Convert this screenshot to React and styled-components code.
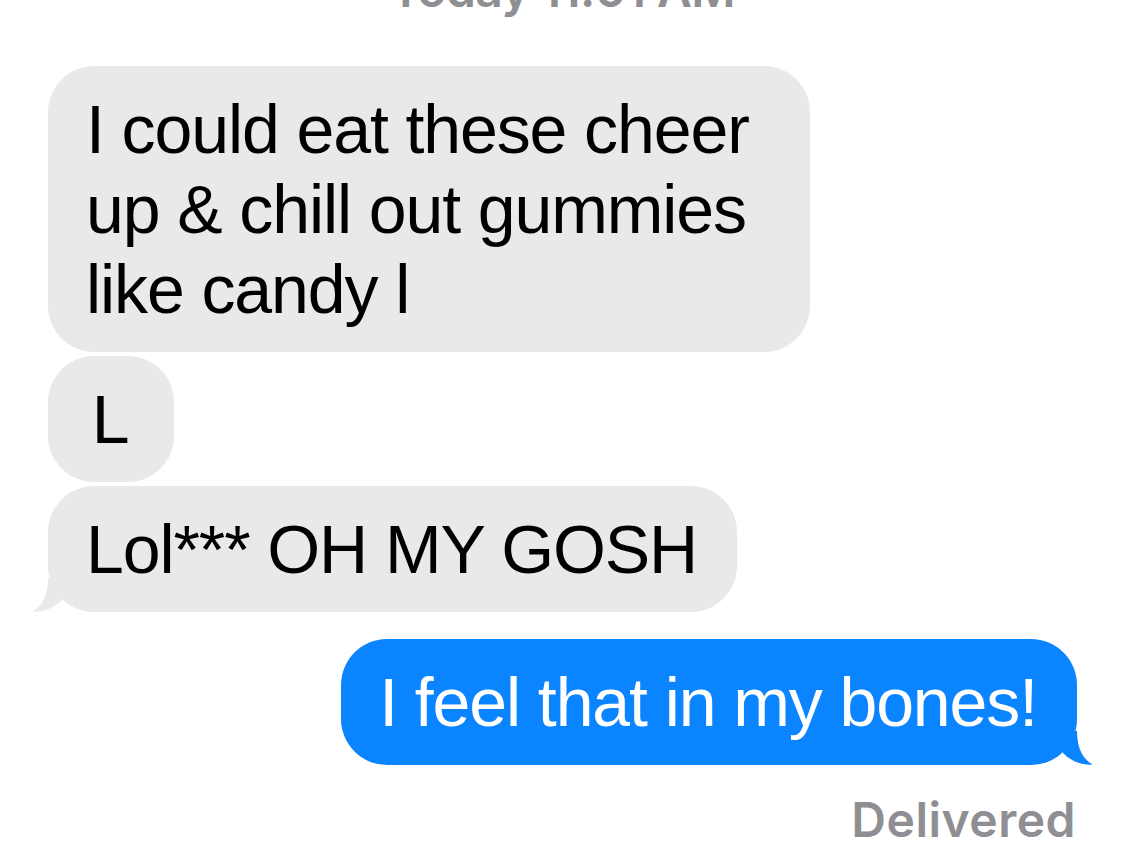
import React from "react"
import styled, { createGlobalStyle } from "styled-components"

const GlobalStyle = createGlobalStyle`
  html, body {
    margin: 0;
    padding: 0;
    background: #ffffff;
    overflow: hidden;
  }
  body {
    font-family: Inter, "Liberation Sans", Arial, sans-serif;
    -webkit-font-smoothing: antialiased;
  }
`

const Thread = styled.main`
  display: flex;
  flex-direction: column;
  padding: 0 48px;
  width: 1125px;
  height: 851px;
  box-sizing: border-box;
  overflow: hidden;
`

const Timestamp = styled.div`
  margin-top: -38px;
  text-align: center;
  font-size: 48px;
  line-height: 56px;
  font-weight: 600;
  color: #8e8e93;
  letter-spacing: -0.6px;
`

const Row = styled.div`
  display: flex;
  justify-content: ${({ $me }) => ($me ? "flex-end" : "flex-start")};
  margin-top: ${({ $gap }) => $gap}px;
`

const Bubble = styled.div`
  position: relative;
  box-sizing: border-box;
  min-width: 126px;
  max-width: 762px;
  padding: 23px 40px 23px 38px;
  border-radius: 46px;
  text-align: ${({ $short }) => ($short ? "center" : "left")};
  font-family: "Liberation Sans", Arial, sans-serif;
  font-size: 68px;
  line-height: 80px;
  letter-spacing: -1.1px;
  background: ${({ $me }) => ($me ? "#0a84ff" : "#e9e9eb")};
  color: ${({ $me }) => ($me ? "#ffffff" : "#000000")};
`

const TailSvg = styled.svg`
  position: absolute;
  bottom: 0;
  width: 32px;
  height: 40px;
  ${({ $me }) =>
    $me ? "right: -16px; transform: scaleX(-1);" : "left: -16px;"}
  fill: ${({ $me }) => ($me ? "#0a84ff" : "#e9e9eb")};
`

const Status = styled.div`
  margin-top: 27px;
  text-align: right;
  font-size: 48px;
  line-height: 56px;
  font-weight: 600;
  color: #8e8e93;
  letter-spacing: 0.5px;
  padding-right: 1px;
`

const Tail = ({ me }) => (
  <TailSvg $me={me} viewBox="0 0 32 40">
    <path d="M16,6 C16,25 9,35 0,39.6 C10,40.6 22,36.5 30,28 L30,6 Z" />
  </TailSvg>
)

const messages = [
  { text: "I could eat these cheer up & chill out gummies like candy l", gap: 48 },
  { text: "L", gap: 4 },
  { text: "Lol*** OH MY GOSH", gap: 4, tail: true },
  { text: "I feel that in my bones!", gap: 27, me: true, tail: true },
]

export default function App() {
  return (
    <>
      <GlobalStyle />
      <Thread>
        <Timestamp>Today 11:01 AM</Timestamp>
        {messages.map((m, i) => (
          <Row key={i} $me={m.me} $gap={m.gap}>
            <Bubble $me={m.me} $short={m.text.length < 3}>
              {m.text}
              {m.tail && <Tail me={m.me} />}
            </Bubble>
          </Row>
        ))}
        <Status>Delivered</Status>
      </Thread>
    </>
  )
}
